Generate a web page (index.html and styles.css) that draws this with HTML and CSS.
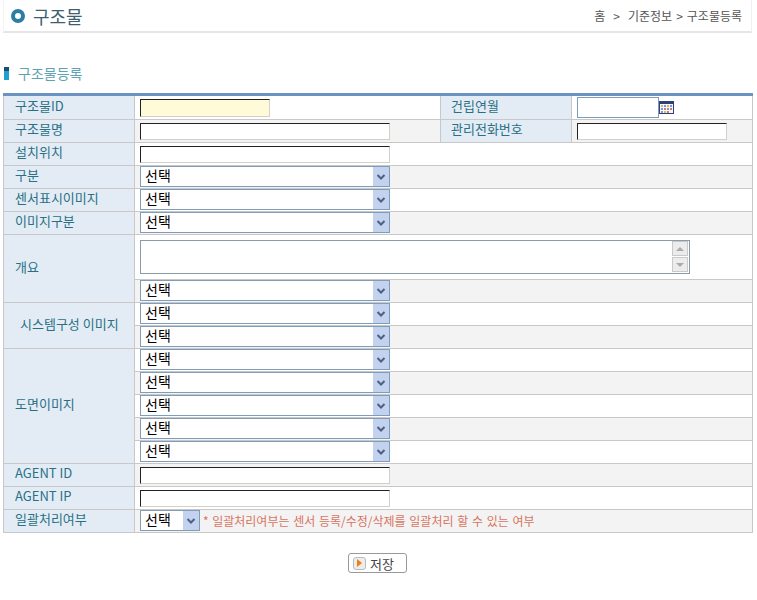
FILE: index.html
```html
<!DOCTYPE html>
<html>
    <head>
        <meta charset="utf-8">
        <title>구조물등록</title>
        <link rel="stylesheet" href="styles.css">
    </head>
    <body>
        <!-- 상단 타이틀 -->
        <div class="top">
            <div class="title">
                <span class="ring"></span>
                <h1>구조물</h1>
            </div>
            <div class="path"><span>홈</span><span class="gt1">&gt;</span><span>기준정보</span><span>&gt;</span><span>구조물등록</span></div>
        </div>
        <!-- 소제목 -->
        <h2 class="sub"><span class="bar"></span>구조물등록</h2>
        <table class="form">
            <colgroup>
                <col class="c1"><col class="c2"><col class="c3"><col class="c4">
            </colgroup>
            <tr class="first">
                <th>구조물ID</th>
                <td><input type="text" class="ip ip-id"></td>
                <th>건립연월</th>
                <td class="date">
                    <input type="text" class="ip ip-date"><svg width="15" height="13" viewBox="0 0 15 13">
                        <rect x="0.5" y="0.5" width="14" height="12" fill="#f4f6fb" stroke="#2b3f7a"/>
                        <rect x="0" y="0" width="15" height="3" fill="#2b3f7a"/>
                        <g fill="#e0b24a"><rect x="2" y="4" width="2" height="2"/><rect x="8" y="4" width="2" height="2"/><rect x="5" y="10" width="2" height="2"/></g>
                        <g fill="#7f95d6"><rect x="5" y="4" width="2" height="2"/><rect x="11" y="4" width="2" height="2"/><rect x="2" y="7" width="2" height="2"/><rect x="8" y="7" width="2" height="2"/><rect x="2" y="10" width="2" height="2"/></g>
                        <g fill="#d07a68"><rect x="5" y="7" width="2" height="2"/><rect x="11" y="7" width="2" height="2"/><rect x="8" y="10" width="2" height="2"/></g>
                    </svg>
                </td>
            </tr>
            <tr class="gray">
                <th>구조물명</th>
                <td><input type="text" class="ip ip-long"></td>
                <th>관리전화번호</th>
                <td><input type="text" class="ip ip-tel"></td>
            </tr>
            <tr>
                <th>설치위치</th>
                <td colspan="3"><input type="text" class="ip ip-long"></td>
            </tr>
            <tr class="gray">
                <th>구분</th>
                <td colspan="3"><select class="sel"><option>선택</option></select></td>
            </tr>
            <tr>
                <th>센서표시이미지</th>
                <td colspan="3"><select class="sel"><option>선택</option></select></td>
            </tr>
            <tr class="gray">
                <th>이미지구분</th>
                <td colspan="3"><select class="sel"><option>선택</option></select></td>
            </tr>
            <tr class="tall">
                <th rowspan="2">개요</th>
                <td colspan="3">
                    <div class="area">
                        <div class="scroll">
                            <span class="btn"><i class="up"></i></span>
                            <span class="btn"><i class="down"></i></span>
                        </div>
                    </div>
                </td>
            </tr>
            <tr class="gray">
                <td colspan="3"><select class="sel"><option>선택</option></select></td>
            </tr>
            <tr>
                <th rowspan="2" class="center">시스템구성 이미지</th>
                <td colspan="3"><select class="sel"><option>선택</option></select></td>
            </tr>
            <tr class="gray">
                <td colspan="3"><select class="sel"><option>선택</option></select></td>
            </tr>
            <tr>
                <th rowspan="5">도면이미지</th>
                <td colspan="3"><select class="sel"><option>선택</option></select></td>
            </tr>
            <tr class="gray">
                <td colspan="3"><select class="sel"><option>선택</option></select></td>
            </tr>
            <tr>
                <td colspan="3"><select class="sel"><option>선택</option></select></td>
            </tr>
            <tr class="gray">
                <td colspan="3"><select class="sel"><option>선택</option></select></td>
            </tr>
            <tr>
                <td colspan="3"><select class="sel"><option>선택</option></select></td>
            </tr>
            <tr class="gray">
                <th>AGENT ID</th>
                <td colspan="3"><input type="text" class="ip ip-long"></td>
            </tr>
            <tr>
                <th>AGENT IP</th>
                <td colspan="3"><input type="text" class="ip ip-long"></td>
            </tr>
            <tr class="gray">
                <th>일괄처리여부</th>
                <td colspan="3" class="batch">
                    <select class="sel sel-short"><option>선택</option></select>
                    <span class="note">* 일괄처리여부는 센서 등록/수정/삭제를 일괄처리 할 수 있는 여부</span>
                </td>
            </tr>
        </table>
        <!-- 저장 버튼 -->
        <div class="btns">
            <button type="button" class="save"><span class="play"><i></i></span>저장</button>
        </div>
    </body>
</html>
```

FILE: styles.css
```css
*{
    margin: 0;
    padding: 0;
    box-sizing: border-box;
}
body{
    background-color: #fff;
    font-family: "Noto Sans CJK KR", "Liberation Sans", sans-serif;
    font-size: 13px;
}
/* 상단 타이틀 */
.top{
    width: 749px;
    height: 33px;
    margin-left: 3px;
    display: flex;
    justify-content: space-between;
    align-items: center;
    padding: 0 9px 0 7px;
    border-bottom: 2px solid #e6e6e6;
    border-right: 1px solid #f0f0f0;
    border-left: 1px solid #f4f4f4;
}
.title{
    display: flex;
    align-items: center;
    gap: 8px;
}
.ring{
    width: 14px;
    height: 14px;
    border: 4px solid #2a7ea3;
    border-radius: 50%;
}
.title h1{
    font-size: 18px;
    font-weight: normal;
    color: #3d5f70;
    line-height: 20px;
}
.path{
    display: flex;
    gap: 4px;
    font-size: 12px;
    color: #555;
}
.path .gt1{
    margin: 0 4px;
}
/* 소제목 */
.sub{
    display: flex;
    align-items: center;
    height: 18px;
    margin: 31px 0 11px 4px;
    font-size: 14px;
    font-weight: normal;
    color: #5fa3b3;
    line-height: 18px;
}
.bar{
    width: 5px;
    height: 13px;
    margin-right: 9px;
    background: linear-gradient(#14507a 0 4px, #1fa0cf 4px);
}
/* 입력 테이블 */
.form{
    width: 750px;
    margin-left: 3px;
    border-collapse: collapse;
    table-layout: fixed;
    border-top: 3px solid #6a93c4;
    border-left: 1px solid #c8c8c8;
    border-right: 1px solid #c8c8c8;
}
.c1{ width: 131px; }
.c2{ width: 306px; }
.c3{ width: 131px; }
.form tr{
    height: 23px;
}
.form tr.first{
    height: 25px;
}
.form tr.tall{
    height: 45px;
}
.form th, .form td{
    border-bottom: 1px solid #c8c8c8;
    vertical-align: middle;
}
.form th{
    background-color: #e3ecf5;
    border-right: 1px solid #c8c8c8;
    padding: 0 0 4px 11px;
    font-weight: normal;
    font-size: 13px;
    line-height: 16px;
    text-align: left;
    color: #2a7085;
    white-space: nowrap;
}
.form th.center{
    padding-left: 16px;
}
.form td + th{
    border-left: 1px solid #c8c8c8;
    padding-left: 10px;
}
.form td{
    padding: 0 0 0 5px;
    line-height: 0;
}
.form tr.gray td{
    background-color: #f3f3f3;
}
/* 입력 상자 */
.ip{
    height: 17px;
    border-style: solid;
    border-width: 1px;
    border-color: #222 #d4d0c8 #d4d0c8 #222;
    background-color: #fff;
    vertical-align: middle;
}
.ip-id{
    width: 130px;
    height: 18px;
    background-color: #fffbd9;
}
.ip-long{
    width: 250px;
}
.ip-tel{
    width: 150px;
}
.ip-date{
    width: 82px;
    height: 21px;
    border-color: #7f9db9;
}
.date{
    white-space: nowrap;
}
.date svg{
    vertical-align: middle;
}
/* 셀렉트 */
.sel{
    width: 250px;
    height: 21px;
    margin-bottom: 1px;
    appearance: none;
    border: 1px solid #7f9db9;
    border-radius: 0;
    padding: 0 0 2px 4px;
    font-family: "Noto Sans CJK KR", "Liberation Sans", sans-serif;
    font-size: 14px;
    line-height: 17px;
    color: #000;
    background-color: #fff;
    background-image: url("data:image/svg+xml,%3Csvg xmlns='http://www.w3.org/2000/svg' width='16' height='19'%3E%3Crect width='16' height='19' fill='%23c3d2ef'/%3E%3Cpath d='M4.5 8l3.5 3.5L11.5 8' fill='none' stroke='%234d6185' stroke-width='2'/%3E%3C/svg%3E");
    background-repeat: no-repeat;
    background-position: right 0 center;
    vertical-align: middle;
}
.sel-short{
    width: 60px;
}
.batch{
    white-space: nowrap;
}
.note{
    font-size: 12px;
    line-height: 14px;
    word-spacing: 1px;
    color: #d9745f;
    vertical-align: middle;
}
/* 개요 */
.area{
    position: relative;
    width: 550px;
    height: 34px;
    border: 1px solid #8a9ba8;
    background-color: #fff;
}
.scroll{
    position: absolute;
    top: 0;
    right: 0;
    display: flex;
    flex-direction: column;
    gap: 1px;
    padding: 0 1px;
    width: 18px;
}
.btn{
    display: flex;
    align-items: center;
    justify-content: center;
    height: 15px;
    background-color: #ececec;
    border: 1px solid #c9c9c9;
}
.btn i{
    width: 0;
    height: 0;
    border-left: 4px solid transparent;
    border-right: 4px solid transparent;
}
.btn .up{
    border-bottom: 4px solid #aaa;
}
.btn .down{
    border-top: 4px solid #aaa;
}
/* 저장 버튼 */
.btns{
    display: flex;
    justify-content: center;
    margin-top: 20px;
    padding-right: 2px;
}
.save{
    display: flex;
    align-items: center;
    gap: 4px;
    width: 59px;
    height: 20px;
    padding-left: 4px;
    border: 1px solid #999;
    border-radius: 3px;
    background-color: #fff;
    font-family: "Noto Sans CJK KR", "Liberation Sans", sans-serif;
    font-size: 13px;
    color: #444;
}
.play{
    display: flex;
    align-items: center;
    justify-content: center;
    width: 13px;
    height: 13px;
    border: 1px solid #a9c0d6;
    border-radius: 3px;
    background-color: #f4ece2;
}
.play i{
    border-top: 4px solid transparent;
    border-bottom: 4px solid transparent;
    border-left: 5px solid #e8801f;
}
```
